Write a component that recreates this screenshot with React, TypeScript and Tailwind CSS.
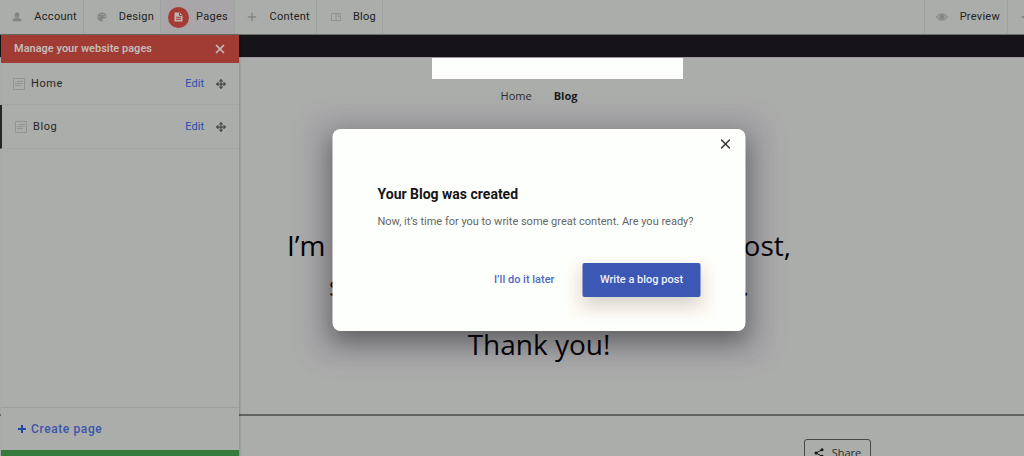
import { Move, X } from "lucide-react";

const TABS = [
  { label: "Account", icon: "user", width: "w-[84px]" },
  { label: "Design", icon: "palette", width: "w-[77px]" },
  { label: "Pages", icon: "pages", width: "w-[74px]" },
  { label: "Content", icon: "plus", width: "w-[82px]" },
  { label: "Blog", icon: "blog", width: "w-[66px]" },
];

const PAGES = [
  { name: "Home", active: false },
  { name: "Blog", active: true },
];

function TabIcon({ name }: { name: string }) {
  switch (name) {
    case "user":
      return (
        <svg width="10" height="10" viewBox="0 0 10 10" fill="#858585">
          <ellipse cx="5" cy="3" rx="2.3" ry="2.8" />
          <path d="M.5 9.2V8c0-1.300 1.500-1.800 3-2.100h3c1.500.3 3 .8 3 2.100v1.200z" />
        </svg>
      );
    case "palette":
      return (
        <svg width="10" height="10" viewBox="0 0 10 10">
          <path
            d="M5 .5C2.200.5.500 2.500.500 5S2.500 9.500 4.700 9.500c1 0 1.200-.8.8-1.500-.4-.8.1-1.500 1-1.500h1c1.300 0 2-.9 2-2.200C9.500 2 7.500.5 5 .5z"
            fill="#858585"
          />
          <g fill="#abadaa">
            <circle cx="2.300" cy="4.700" r=".7" />
            <circle cx="3.700" cy="2.600" r=".7" />
            <circle cx="6.200" cy="2.500" r=".7" />
            <circle cx="7.800" cy="4.200" r=".7" />
          </g>
        </svg>
      );
    case "pages":
      return (
        <span className="flex h-[21px] w-[21px] items-center justify-center rounded-full bg-[#a53c34]">
          <svg width="9" height="10" viewBox="0 0 9 10">
            <path d="M1 .5h4.700L8.500 3.300v5.700q0 .5-.5.5H1q-.5 0-.5-.5V1q0-.5.5-.5z" fill="#c0b5b4" />
            <path d="M5.500 1v2.500H8M2 5.300h5M2 7.300h5" stroke="#a53c34" fill="none" />
          </svg>
        </span>
      );
    case "plus":
      return (
        <svg width="10" height="10" viewBox="0 0 10 10">
          <path d="M5 .8v8.400M.8 5h8.400" stroke="#858585" strokeWidth="1.500" />
        </svg>
      );
    default:
      return (
        <svg width="10" height="10" viewBox="0 0 10 10" fill="none" stroke="#929292">
          <path d="M.5 1.500h9v7h-9zM5 1.500v7M7 2v2.500h2.500" />
        </svg>
      );
  }
}

function Tab({ tab }: { tab: (typeof TABS)[number] }) {
  const active = tab.icon === "pages";
  return (
    <button
      type="button"
      className={`flex h-full shrink-0 items-center justify-end border-r border-[#a0a2a0] pr-[6px] ${tab.width} ${
        active ? "gap-[7px] bg-[#a9a6a9]" : "gap-3"
      }`}
    >
      <TabIcon name={tab.icon} />
      {tab.label}
    </button>
  );
}

function TopBar() {
  return (
    <header className="flex h-[35px] border-b border-[#6d706e] text-[11px] leading-[18px] tracking-wide text-[#222]">
      <nav className="flex flex-1">
        {TABS.map((t) => (
          <Tab key={t.label} tab={t} />
        ))}
      </nav>
      <button type="button" className="flex w-[84px] items-center justify-end gap-3 border-x border-[#a0a2a0] pr-[7px]">
        <svg width="12" height="10" viewBox="0 0 12 10">
          <path d="M.5 5C3 .8 9 .8 11.500 5 9 9.200 3 9.200.5 5z" fill="#a0a2a0" stroke="#858585" />
          <circle cx="6" cy="4.700" r="2.500" fill="#858585" />
        </svg>
        Preview
      </button>
      <button type="button" aria-label="Publish" className="flex w-[70px] items-center pl-3">
        <svg width="10" height="10" viewBox="0 0 10 10" fill="#858585">
          <path d="M.5 5 5 3v4zM5 4.500h4.500v1H5z" />
        </svg>
      </button>
    </header>
  );
}

function Sidebar() {
  return (
    <aside className="absolute inset-y-0 left-px z-10 flex w-[238px] flex-col bg-[#abadaa] shadow-[1px_0_2px_rgba(0,0,0,0.2)]">
      <div className="flex h-7 items-center justify-between bg-[#a03c34] pr-3 pl-[13px] text-[#c3bbb8]">
        <h2 className="text-[11px] leading-[18px] font-semibold">Manage your website pages</h2>
        <button type="button" aria-label="Close pages">
          <X size={14} strokeWidth={3} />
        </button>
      </div>

      <ul className="flex-1 text-[11px] leading-[18px] text-[#252525]">
        {PAGES.map((p) => (
          <li
            key={p.name}
            className={`flex items-center border-b border-[#a6a4a7] pr-[13px] ${
              p.active ? "-ml-px h-11 border-l-2 border-l-[#252525] pl-[13px]" : "h-[42px] pl-3"
            }`}
          >
            <svg width="12" height="12" viewBox="0 0 12 12" fill="none" stroke="#929492">
              <path d="M.5.5h11v11H.5zM4 3.500h6M2 5.500h8M2 7.500h6" />
            </svg>
            <span className="ml-[6px] flex-1 tracking-wider">{p.name}</span>
            <a href="#edit" className="mr-3 text-[#2c4cb0]">
              Edit
            </a>
            <button type="button" aria-label={`Move ${p.name}`} className="text-[#484848]">
              <Move size={10} strokeWidth={3} />
            </button>
          </li>
        ))}
      </ul>

      <button
        type="button"
        className="flex h-[43px] items-center gap-1 border-t border-[#a09ea2] pl-4 text-xs font-medium tracking-wider text-[#3a55ab]"
      >
        <svg width="10" height="10" viewBox="0 0 10 10">
          <path d="M5 1v8M1 5h8" stroke="#2245b0" strokeWidth="2" />
        </svg>
        Create page
      </button>
      <div className="h-[6px] bg-[#367b3c]" />
    </aside>
  );
}

function SitePreview() {
  return (
    <div className="flex min-h-[421px] flex-col font-['Open_Sans',sans-serif]">
      <div className="h-[22px] bg-[#151317]" />
      <div className="flex flex-1 flex-col border-t border-[#9d999d] text-center text-black">
        <div className="ml-9 h-[21px] w-[251px] self-center bg-[#fdfffc]" />
        <nav className="mt-2 flex justify-center gap-[22px] text-[11px] leading-[18px]">
          <a href="#home" className="text-[#2c2c2c]">
            Home
          </a>
          <a href="#blog" className="font-bold text-[#1c1c1c]">
            Blog
          </a>
        </nav>
        <div className="mt-[121px] text-[28px] leading-[38px]">
          <p className="mx-auto flex w-[504px] justify-between">
            <span>I’m</span>
            <span>post,</span>
          </p>
          <p className="mx-auto mt-[2px] flex w-[420px] justify-between">
            <span>s</span>
            <span>.</span>
          </p>
          <p className="mt-[21px]">Thank you!</p>
        </div>
        <hr className="mt-[51px] border-t-2 border-[#606361]" />
        <div className="mt-[23px] -mb-3 pl-[804px]">
          <button
            type="button"
            className="flex h-7 w-[67px] items-center justify-center gap-2 rounded-[3px] border border-[#484848] text-[11px] leading-[18px] text-[#2c2c2c]"
          >
            <svg width="10" height="10" viewBox="0 0 10 10" fill="#151515">
              <path d="M8 1.800 2 5l6 3.200" fill="none" stroke="#151515" />
              <circle cx="8" cy="1.800" r="1.500" />
              <circle cx="2" cy="5" r="1.500" />
              <circle cx="8" cy="8.200" r="1.500" />
            </svg>
            Share
          </button>
        </div>
      </div>
    </div>
  );
}

function BlogCreatedDialog() {
  return (
    <div
      role="dialog"
      aria-labelledby="dialog-title"
      className="absolute top-[129px] left-1/2 z-20 w-[413px] -translate-x-1/2 rounded-lg bg-[#fdfffc] px-[45px] pt-14 pb-[34px] shadow-[0_10px_24px_rgba(0,0,0,0.38),0_7px_24px_14px_rgba(0,0,0,0.07),0_7px_16px_30px_rgba(120,60,150,0.06)]"
    >
      <button type="button" aria-label="Close" className="absolute top-[7px] right-3 text-[#333]">
        <X size={16} strokeWidth={2} />
      </button>
      <h1 id="dialog-title" className="text-sm leading-[18px] font-bold text-[#151515]">
        Your Blog was created
      </h1>
      <p className="mt-[10px] text-[11px] leading-[18px] whitespace-nowrap text-[#666]">
        Now, it’s time for you to write some great content. Are you ready?
      </p>
      <div className="mt-8 flex justify-end gap-7 text-[11px] leading-[18px] font-medium">
        <button type="button" className="text-[#5069bc]">
          I’ll do it later
        </button>
        <button
          type="button"
          className="h-[34px] w-[118px] rounded-[2px] bg-[#3c58b4] text-[#eef0f8] shadow-[0_8px_18px_rgba(0,0,0,0.16),0_9px_8px_12px_rgba(250,190,130,0.07)]"
        >
          Write a blog post
        </button>
      </div>
    </div>
  );
}

export default function App() {
  return (
    <div className="h-screen overflow-hidden bg-[#abadaa] font-[Roboto,sans-serif]">
      <div className="relative flex h-full w-[calc(100%+54px)] flex-col">
        <TopBar />
        <div className="relative min-h-0 flex-1">
          <Sidebar />
          <SitePreview />
        </div>
        <BlogCreatedDialog />
      </div>
    </div>
  );
}
